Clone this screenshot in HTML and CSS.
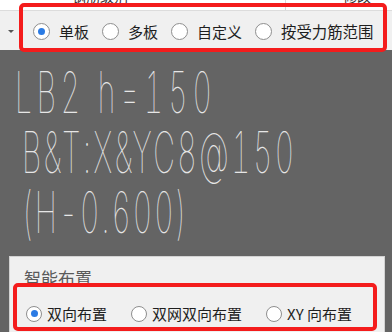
FILE: index.html
```html
<!DOCTYPE html>
<html lang="zh">
<head>
<meta charset="utf-8">
<title>板筋布置</title>
<link rel="stylesheet" href="styles.css">
</head>
<body>
<div class="screen">
  <div class="topstrip">
    <span class="cut cut-left">钢筋级别</span>
    <span class="vsep"></span>
    <span class="cut cut-right">修改</span>
  </div>
  <div class="toolbar">
    <span class="caret"></span>
    <div class="radios radios-top">
      <span class="radio on"><i class="dot"></i>单板</span>
      <span class="radio"><i class="dot"></i>多板</span>
      <span class="radio"><i class="dot"></i>自定义</span>
      <span class="radio"><i class="dot"></i>按受力筋范围</span>
    </div>
  </div>
  <div class="canvas">
    <div class="cad line1">LB2 h=150</div>
    <div class="cad line2">B&amp;T:X&amp;YC8@150</div>
    <div class="cad line3">(H-0.600)</div>
  </div>
  <div class="panel">
    <div class="legend">智能布置</div>
    <div class="radios radios-bottom">
      <span class="radio on"><i class="dot"></i>双向布置</span>
      <span class="radio"><i class="dot"></i>双网双向布置</span>
      <span class="radio"><i class="dot"></i>XY 向布置</span>
    </div>
  </div>
  <div class="mark mark-top"></div>
  <div class="mark mark-bottom"></div>
</div>
</body>
</html>
```
FILE: styles.css
```css
* { box-sizing: border-box; }
html, body { margin: 0; padding: 0; }
body {
  width: 392px;
  height: 332px;
  overflow: hidden;
  background: #646464;
  font-family: "Noto Sans CJK SC", "Noto Sans", sans-serif;
}
.screen {
  position: relative;
  width: 392px;
  height: 332px;
  overflow: hidden;
  display: flex;
  flex-direction: column;
}
.topstrip {
  height: 11px;
  flex: none;
  background: #ffffff;
  border-bottom: 1px solid #dcdcdc;
  display: flex;
  align-items: flex-end;
  overflow: hidden;
}
.cut {
  font-size: 14px;
  line-height: 14px;
  color: #333;
  margin-bottom: 7px;
  white-space: nowrap;
}
.cut-left { margin-left: 72px; }
.vsep {
  width: 1px;
  height: 10px;
  background: #d8d8d8;
  margin-left: 157px;
  align-self: flex-start;
}
.cut-right { margin-left: 57px; }

.toolbar {
  height: 39px;
  flex: none;
  background: #f0f0f0;
  display: flex;
  align-items: center;
}
.caret {
  width: 0;
  height: 0;
  margin-left: 8px;
  margin-top: 2px;
  border-left: 3px solid transparent;
  border-right: 3px solid transparent;
  border-top: 3px solid #555;
}
.radios {
  display: flex;
  align-items: center;
}
.radio {
  display: flex;
  align-items: center;
  font-size: 15px;
  color: #1e1e1e;
  white-space: nowrap;
}
.dot {
  width: 17px;
  height: 17px;
  border-radius: 50%;
  border: 1px solid #8e8e8e;
  background: #fff;
  display: flex;
  align-items: center;
  justify-content: center;
  flex: none;
}
.radio.on .dot::after {
  content: "";
  width: 7px;
  height: 7px;
  border-radius: 50%;
  background: #2b7be4;
}
.radios-top { margin-left: 19px; margin-top: 1px; }
.radios-top .radio { margin-right: 13px; }
.radios-top .dot { margin-right: 9px; }
.radios-top .radio:last-child { font-size: 15.4px; }

.canvas {
  height: 206px;
  flex: none;
  background: #646464;
  padding-top: 14px;
}
.cad {
  font-family: Inter, Roboto, "DejaVu Sans", sans-serif;
  font-weight: 100;
  font-size: 30px;
  line-height: 31px;
  height: 31px;
  margin-bottom: 29px;
  color: #e6e6e6;
  white-space: nowrap;
  transform: scaleY(1.9);
  transform-origin: left top;
  font-variant-numeric: tabular-nums;
}
.line1 { padding-left: 15px; letter-spacing: 4.8px; }
.line2 { padding-left: 22px; letter-spacing: 2.5px; }
.line3 { padding-left: 21px; letter-spacing: 2px; }

.panel {
  flex: 1;
  margin-left: 9px;
  width: 376px;
  background: #f0f0f0;
  border: 1px solid #d2d2d2;
  border-bottom: none;
  padding: 11px 0 0 14px;
}
.legend {
  font-size: 17px;
  line-height: 20px;
  color: #5a5a5a;
}
.radios-bottom { margin-top: 15px; margin-left: 2px; }
.radios-bottom .radio { margin-right: 24px; }
.radios-bottom .dot { margin-right: 5px; width: 16px; height: 16px; }

.mark {
  position: absolute;
  border: 4px solid #f41c1c;
  border-radius: 5px;
  pointer-events: none;
}
.mark-top { left: 19px; top: 3px; width: 368px; height: 49px; }
.mark-bottom { left: 13px; top: 283px; width: 364px; height: 48px; }
```
